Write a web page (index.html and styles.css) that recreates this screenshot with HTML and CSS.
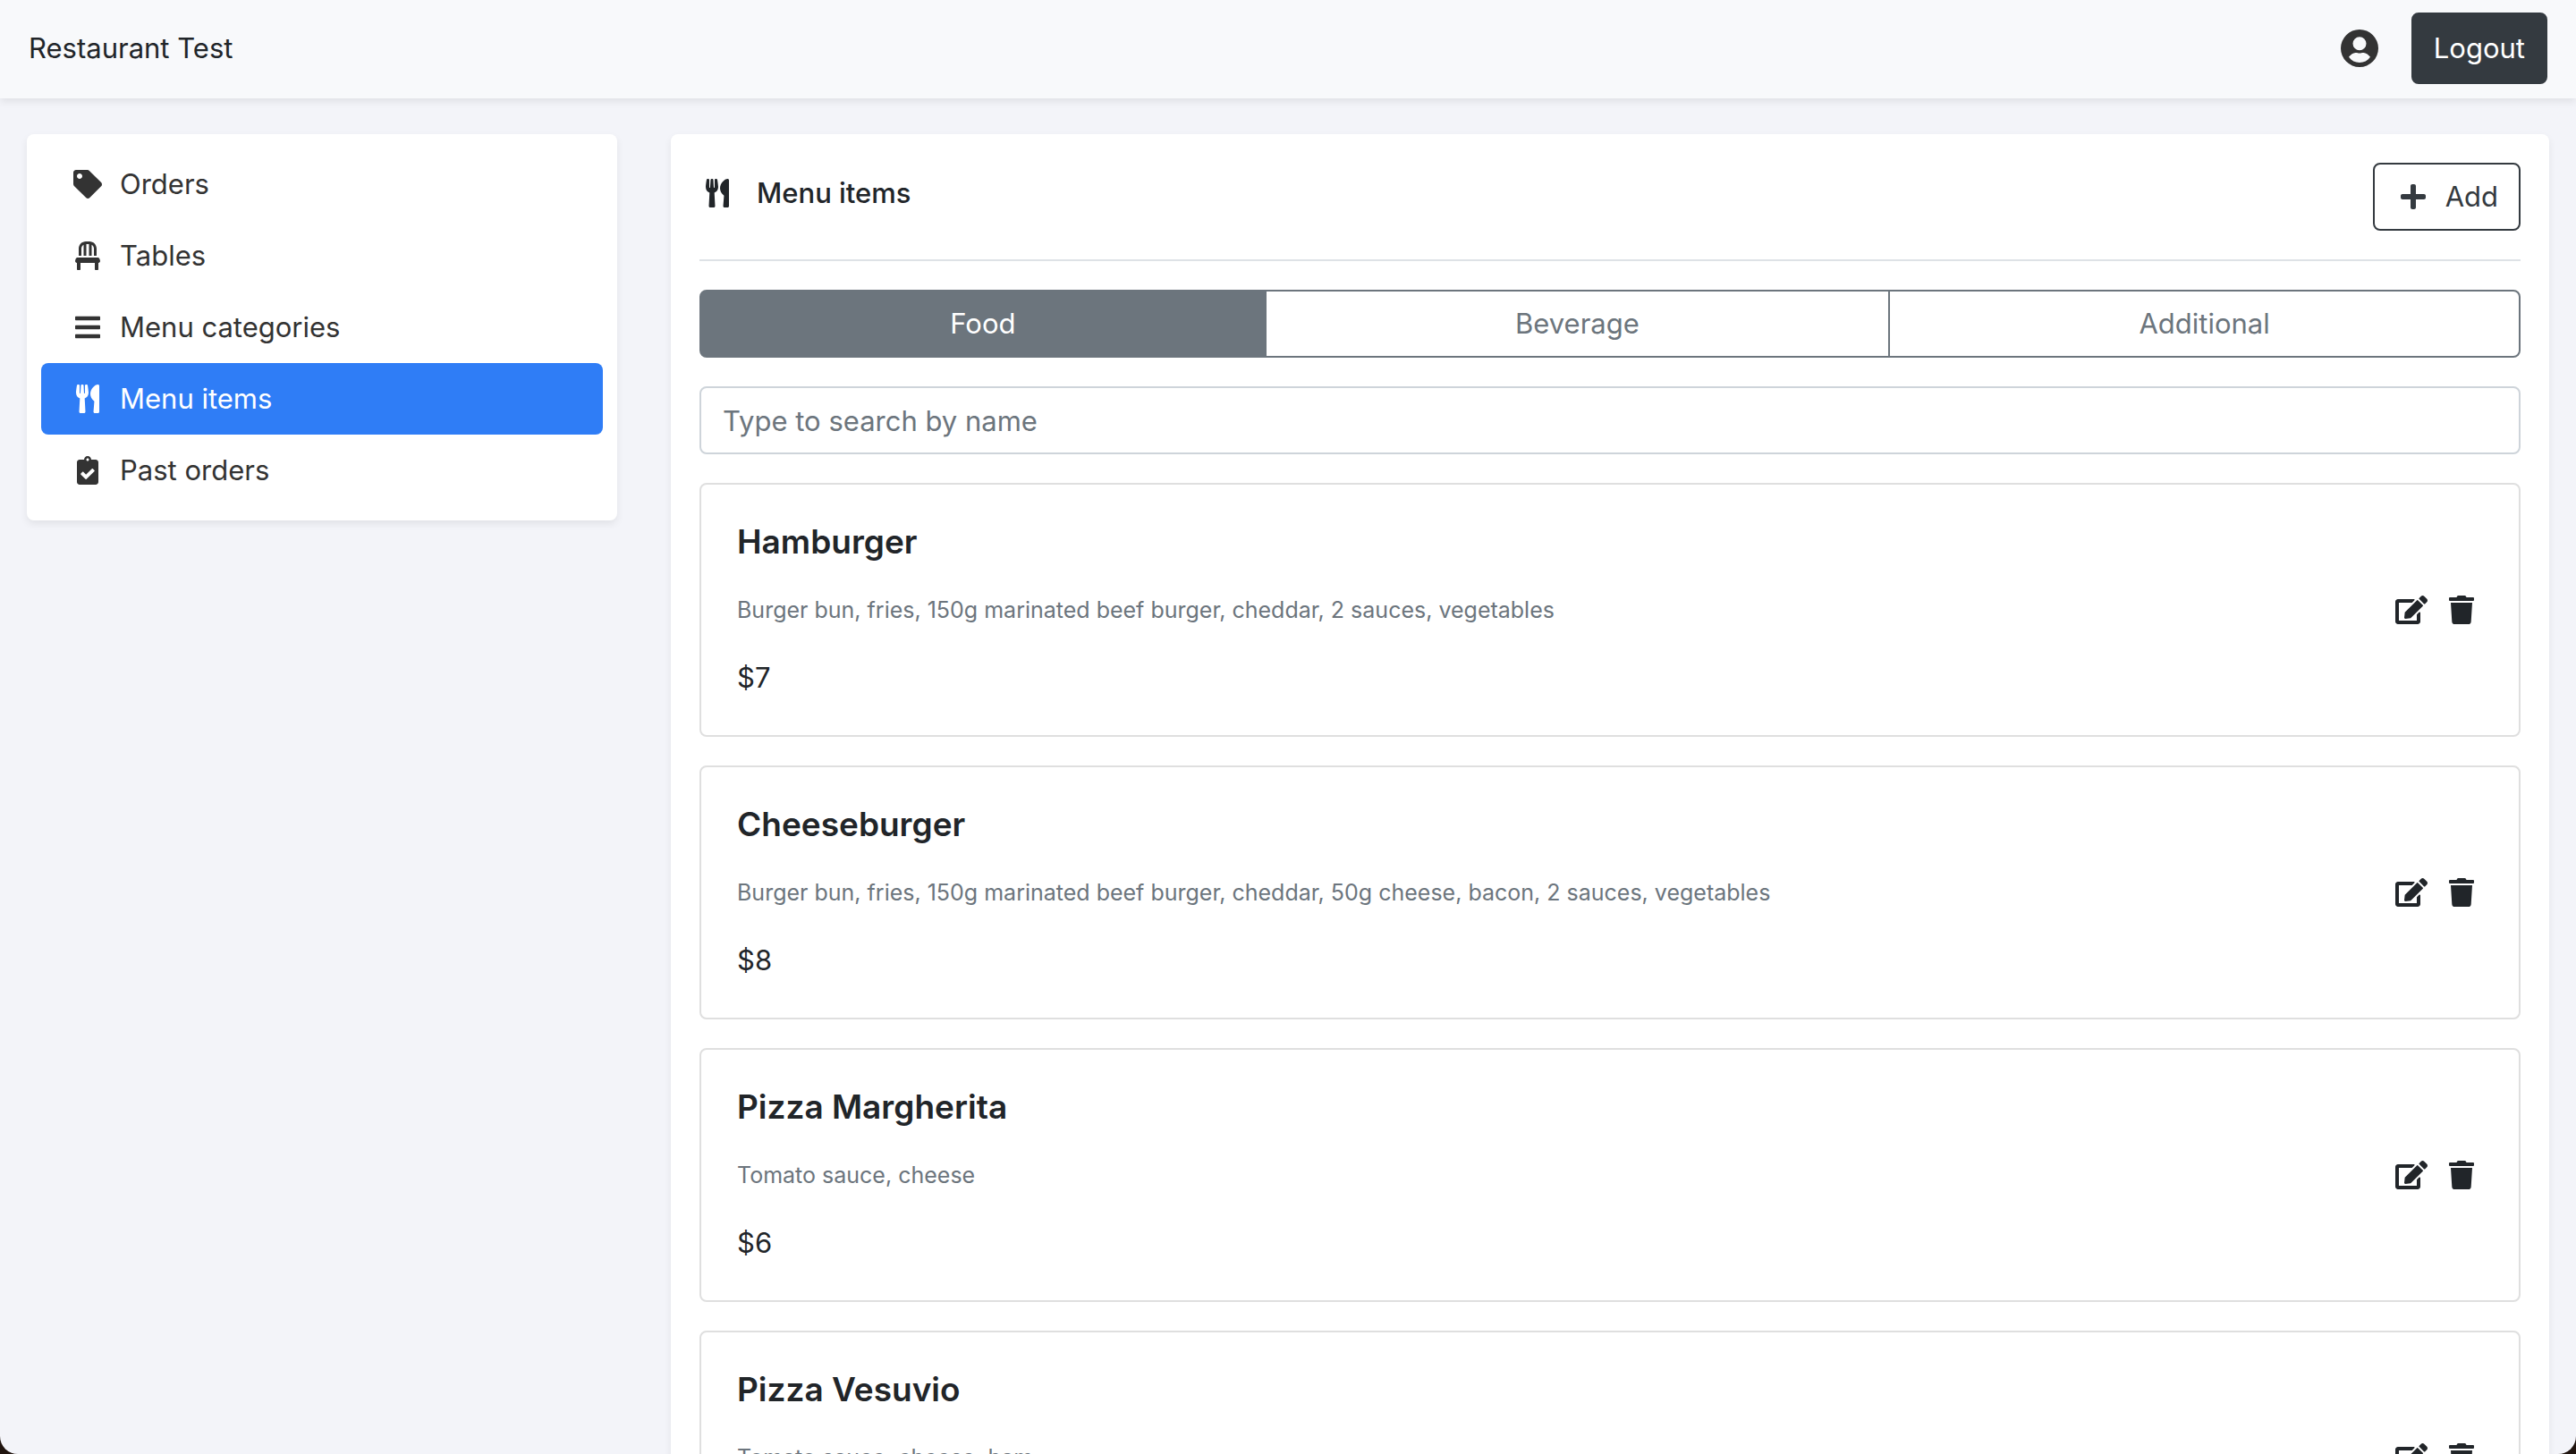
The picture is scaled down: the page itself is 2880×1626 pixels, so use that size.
FILE: index.html
```html
<!DOCTYPE html>
<html lang="en">
<head>
<meta charset="utf-8">
<meta name="viewport" content="width=device-width, initial-scale=1">
<title>Restaurant Test</title>
<link rel="stylesheet" href="styles.css">
</head>
<body>
<svg class="sprite" aria-hidden="true">
  <symbol id="tag" viewBox="0 0 512 512"><path d="M0 252.118V48C0 21.49 21.49 0 48 0h204.118a48 48 0 0 1 33.941 14.059l211.882 211.882c18.745 18.745 18.745 49.137 0 67.882L293.823 497.941c-18.745 18.745-49.137 18.745-67.882 0L14.059 286.059A48 48 0 0 1 0 252.118zM112 64c-26.51 0-48 21.49-48 48s21.49 48 48 48 48-21.49 48-48-21.49-48-48-48z"/></symbol>
  <symbol id="chair" viewBox="0 0 448 512"><path d="M112 128c0-29.5 16.2-55 40-68.900V256h48V48h48v208h48V59.100c23.800 13.900 40 39.400 40 68.900v128h48V128C384 57.300 326.700 0 256 0h-64C121.300 0 64 57.300 64 128v128h48zm334.300 213.900l-10.700-32c-4.400-13.100-16.600-21.900-30.400-21.900H42.700c-13.800 0-26 8.800-30.400 21.900l-10.700 32C-5.200 362.600 10.200 384 32 384v112c0 8.800 7.200 16 16 16h32c8.800 0 16-7.200 16-16V384h256v112c0 8.800 7.200 16 16 16h32c8.800 0 16-7.200 16-16V384c21.800 0 37.200-21.400 30.300-42.100z"/></symbol>
  <symbol id="bars" viewBox="0 0 448 512"><path d="M16 132h416c8.837 0 16-7.163 16-16V76c0-8.837-7.163-16-16-16H16C7.163 60 0 67.163 0 76v40c0 8.837 7.163 16 16 16zm0 160h416c8.837 0 16-7.163 16-16v-40c0-8.837-7.163-16-16-16H16c-8.837 0-16 7.163-16 16v40c0 8.837 7.163 16 16 16zm0 160h416c8.837 0 16-7.163 16-16v-40c0-8.837-7.163-16-16-16H16c-8.837 0-16 7.163-16 16v40c0 8.837 7.163 16 16 16z"/></symbol>
  <symbol id="utensils" viewBox="0 0 416 512"><path d="M207.9 15.2c.8 4.700 16.100 94.500 16.100 128.800 0 52.300-27.800 89.600-68.900 104.600L168 486.700c.7 13.700-10.200 25.300-24 25.300H80c-13.700 0-24.700-11.500-24-25.300l12.900-238.100C27.700 233.600 0 196.200 0 144 0 109.600 15.300 19.900 16.100 15.200 19.300-5.100 61.400-5.400 64 16.300v141.200c1.300 3.400 15.100 3.200 16 0 1.400-25.300 7.900-139.200 8-141.800 3.300-20.800 44.700-20.800 47.900 0 .2 2.700 6.600 116.500 8 141.800.9 3.200 14.800 3.400 16 0V16.300c2.600-21.600 44.800-21.400 48-1.100zm119.200 285.700l-15 185.100c-1.200 14 9.900 26 23.900 26h56c13.300 0 24-10.700 24-24V24c0-13.200-10.700-24-24-24-82.500 0-221.400 178.500-64.900 300.900z"/></symbol>
  <symbol id="clipboard" viewBox="0 0 384 512"><path fill-rule="evenodd" d="M336 64h-80c0-35.300-28.700-64-64-64s-64 28.700-64 64H48C21.500 64 0 85.500 0 112v352c0 26.500 21.500 48 48 48h288c26.500 0 48-21.500 48-48V112c0-26.500-21.500-48-48-48zM192 40c13.300 0 24 10.700 24 24s-10.700 24-24 24-24-10.700-24-24 10.700-24 24-24zm121.200 231.800l-143 141.800c-4.700 4.700-12.300 4.600-17-.1l-82.600-83.300c-4.700-4.700-4.600-12.300.1-17L99.100 285c4.700-4.700 12.300-4.600 17 .1l46 46.400 106-105.200c4.700-4.700 12.300-4.600 17 .1l28.200 28.400c4.700 4.800 4.600 12.300-.1 17z"/></symbol>
  <symbol id="plus" viewBox="0 0 448 512"><path d="M416 208H272V64c0-17.670-14.330-32-32-32h-32c-17.670 0-32 14.330-32 32v144H32c-17.670 0-32 14.330-32 32v32c0 17.670 14.330 32 32 32h144v144c0 17.670 14.330 32 32 32h32c17.670 0 32-14.330 32-32V304h144c17.670 0 32-14.330 32-32v-32c0-17.670-14.330-32-32-32z"/></symbol>
  <symbol id="edit" viewBox="0 0 576 512"><path d="M402.600 83.200l90.200 90.200c3.800 3.800 3.800 10 0 13.800L274.400 405.600l-92.800 10.300c-12.400 1.400-22.900-9.100-21.500-21.500l10.300-92.800L388.800 83.200c3.800-3.800 10-3.800 13.800 0zm162-22.900l-48.800-48.800c-15.200-15.200-39.900-15.200-55.200 0l-35.400 35.400c-3.800 3.800-3.800 10 0 13.800l90.200 90.200c3.800 3.800 10 3.800 13.800 0l35.400-35.400c15.200-15.300 15.200-40 0-55.200zM384 346.200V448H64V128h229.800c3.200 0 6.200-1.300 8.500-3.500l40-40c7.600-7.600 2.200-20.500-8.500-20.500H48C21.500 64 0 85.500 0 112v352c0 26.500 21.500 48 48 48h352c26.500 0 48-21.500 48-48V306.200c0-10.700-12.900-16-20.500-8.500l-40 40c-2.200 2.300-3.500 5.300-3.500 8.500z"/></symbol>
  <symbol id="trash" viewBox="0 0 448 512"><path d="M432 32H312l-9.400-18.700A24 24 0 0 0 281.100 0H166.800a23.720 23.720 0 0 0-21.400 13.300L136 32H16A16 16 0 0 0 0 48v32a16 16 0 0 0 16 16h416a16 16 0 0 0 16-16V48a16 16 0 0 0-16-16zM53.200 467a48 48 0 0 0 47.900 45h245.800a48 48 0 0 0 47.900-45L416 128H32z"/></symbol>
  <symbol id="account" viewBox="0 0 42 42"><path fill-rule="evenodd" d="M21 0a21 21 0 1 0 0 42 21 21 0 1 0 0-42zM21 8.200a7.500 7.500 0 1 1 0 15 7.500 7.500 0 1 1 0-15zM9 30.800C12 27 15 26 17.200 26c1.300 0 2.200.6 3.800.6s2.500-.6 3.800-.6c2.200 0 5.200 1 8.200 4.800C30 35 26 37 21 37S12 35 9 30.800z"/></symbol>
</svg>

<div class="app">
  <header class="topbar">
    <a class="brand" href="#">Restaurant Test</a>
    <div class="topbar-actions">
      <a class="account" href="#" aria-label="Account"><svg><use href="#account"/></svg></a>
      <button class="btn btn-dark" type="button">Logout</button>
    </div>
  </header>

  <div class="layout">
    <nav class="panel sidebar">
      <a class="nav-link" href="#"><svg class="icon"><use href="#tag"/></svg>Orders</a>
      <a class="nav-link" href="#"><svg class="icon"><use href="#chair"/></svg>Tables</a>
      <a class="nav-link" href="#"><svg class="icon"><use href="#bars"/></svg>Menu categories</a>
      <a class="nav-link active" href="#" aria-current="page"><svg class="icon"><use href="#utensils"/></svg>Menu items</a>
      <a class="nav-link" href="#"><svg class="icon"><use href="#clipboard"/></svg>Past orders</a>
    </nav>

    <main class="panel content">
      <div class="content-head">
        <h1 class="content-title"><svg class="icon"><use href="#utensils"/></svg>Menu items</h1>
        <button class="btn btn-outline" type="button"><svg class="icon"><use href="#plus"/></svg>Add</button>
      </div>

      <div class="tabs">
        <button class="tab active" type="button">Food</button>
        <button class="tab" type="button">Beverage</button>
        <button class="tab" type="button">Additional</button>
      </div>

      <input class="search" type="text" placeholder="Type to search by name" aria-label="Search by name">

      <article class="card">
        <div class="card-body">
          <h2 class="card-title">Hamburger</h2>
          <p class="card-text">Burger bun, fries, 150g marinated beef burger, cheddar, 2 sauces, vegetables</p>
          <p class="card-price">$7</p>
        </div>
        <div class="card-actions">
          <button class="icon-btn" type="button" aria-label="Edit"><svg class="icon-edit"><use href="#edit"/></svg></button>
          <button class="icon-btn" type="button" aria-label="Delete"><svg class="icon-trash"><use href="#trash"/></svg></button>
        </div>
      </article>

      <article class="card">
        <div class="card-body">
          <h2 class="card-title">Cheeseburger</h2>
          <p class="card-text">Burger bun, fries, 150g marinated beef burger, cheddar, 50g cheese, bacon, 2 sauces, vegetables</p>
          <p class="card-price">$8</p>
        </div>
        <div class="card-actions">
          <button class="icon-btn" type="button" aria-label="Edit"><svg class="icon-edit"><use href="#edit"/></svg></button>
          <button class="icon-btn" type="button" aria-label="Delete"><svg class="icon-trash"><use href="#trash"/></svg></button>
        </div>
      </article>

      <article class="card">
        <div class="card-body">
          <h2 class="card-title">Pizza Margherita</h2>
          <p class="card-text">Tomato sauce, cheese</p>
          <p class="card-price">$6</p>
        </div>
        <div class="card-actions">
          <button class="icon-btn" type="button" aria-label="Edit"><svg class="icon-edit"><use href="#edit"/></svg></button>
          <button class="icon-btn" type="button" aria-label="Delete"><svg class="icon-trash"><use href="#trash"/></svg></button>
        </div>
      </article>

      <article class="card">
        <div class="card-body">
          <h2 class="card-title">Pizza Vesuvio</h2>
          <p class="card-text">Tomato sauce, cheese, ham</p>
          <p class="card-price">$7</p>
        </div>
        <div class="card-actions">
          <button class="icon-btn" type="button" aria-label="Edit"><svg class="icon-edit"><use href="#edit"/></svg></button>
          <button class="icon-btn" type="button" aria-label="Delete"><svg class="icon-trash"><use href="#trash"/></svg></button>
        </div>
      </article>
    </main>
  </div>
</div>
</body>
</html>
```
FILE: styles.css
```css
* {
  box-sizing: border-box;
}

body {
  margin: 0;
  background: #20140f;
  color: #212529;
  font: 400 31px/48px Inter, "Liberation Sans", sans-serif;
}

h1, h2, p {
  margin: 0;
}

button, input {
  font: inherit;
}

a {
  color: inherit;
  text-decoration: none;
}

svg {
  display: block;
  fill: currentColor;
}

.sprite {
  display: none;
}

/* Scrolling window surface with rounded bottom corners */
.app {
  height: 100vh;
  overflow-y: auto;
  scrollbar-width: none;
  background: #f3f4f9;
  border-radius: 0 0 20px 20px;
}

.topbar {
  display: flex;
  align-items: center;
  justify-content: space-between;
  padding: 14px 32px 16px;
  background: #f8f9fb;
  box-shadow: 0 4px 8px rgba(0, 0, 0, 0.075);
}

.topbar-actions {
  display: flex;
  align-items: center;
  gap: 37px;
}

.account {
  color: #333;
}

.account svg {
  width: 42px;
  height: 42px;
}

.btn {
  border: 2px solid #343a40;
  border-radius: 8px;
  cursor: pointer;
}

.btn-dark {
  padding: 14px 23px;
  background: #343a40;
  color: #fff;
}

.btn-outline {
  display: flex;
  align-items: center;
  gap: 16px;
  padding: 12px 23px;
  background: transparent;
  color: #343a40;
}

.layout {
  display: grid;
  grid-template-columns: minmax(0, 1fr) minmax(0, 3fr);
  align-items: start;
}

.panel {
  margin: 40px 30px;
  background: #fff;
  border-radius: 8px;
  box-shadow: 0 4px 8px rgba(0, 0, 0, 0.075);
}

.sidebar {
  padding: 16px;
}

.nav-link {
  display: flex;
  align-items: center;
  gap: 16px;
  padding: 16px 32px;
  border-radius: 8px;
  color: #333;
}

.nav-link.active {
  background: #2f7df6;
  color: #fff;
}

.icon {
  width: 40px;
  height: 32px;
}

.content {
  display: flex;
  flex-direction: column;
  gap: 32px;
  padding: 32px;
}

.content-head {
  display: flex;
  align-items: flex-start;
  justify-content: space-between;
  padding-bottom: 32px;
  border-bottom: 2px solid #dee2e6;
}

.content-title {
  display: flex;
  align-items: center;
  gap: 24px;
  padding-top: 10px;
  font-size: 31px;
  font-weight: 500;
}

.tabs {
  display: flex;
}

.tab {
  flex: 1 1 auto;
  padding: 12px 24px;
  border: 2px solid #6c757d;
  background: #fff;
  color: #6c757d;
  cursor: pointer;
}

.tab + .tab {
  margin-left: -2px;
}

.tab:first-child {
  border-radius: 8px 0 0 8px;
}

.tab:last-child {
  border-radius: 0 8px 8px 0;
}

.tab.active {
  background: #6c757d;
  color: #fff;
}

.search {
  width: 100%;
  height: 76px;
  padding: 12px 24px;
  border: 2px solid #ced4da;
  border-radius: 8px;
  color: #495057;
}

.search::placeholder {
  color: #6c757d;
  opacity: 1;
}

.card {
  display: flex;
  align-items: center;
  justify-content: space-between;
  padding: 40px;
  border: 2px solid #dfdfdf;
  border-radius: 8px;
}

.card-body {
  display: flex;
  flex-direction: column;
  gap: 32px;
}

.card-title {
  font-size: 37px;
  font-weight: 600;
  line-height: 48px;
}

.card-text {
  color: #6c757d;
  font-size: 25px;
  line-height: 40px;
}

.card-actions {
  display: flex;
  gap: 4px;
}

.icon-btn {
  padding: 10px;
  border: 0;
  background: none;
  color: #212529;
  cursor: pointer;
}

.icon-edit {
  width: 36px;
  height: 32px;
}

.icon-trash {
  width: 28px;
  height: 32px;
}
```
